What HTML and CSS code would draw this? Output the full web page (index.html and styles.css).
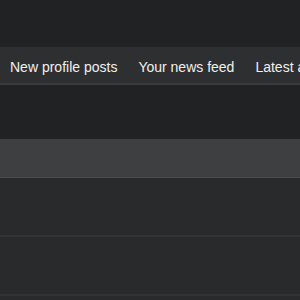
FILE: index.html
```html
<!DOCTYPE html>
<html>
<head>
<meta charset="utf-8">
<link rel="stylesheet" href="styles.css">
</head>
<body>
<div class="top"></div>
<nav class="tabs">
  <a class="tab">New profile posts</a>
  <a class="tab">Your news feed</a>
  <a class="tab">Latest activity</a>
</nav>
<div class="gap"></div>
<div class="head"></div>
<div class="row"></div>
<div class="row"></div>
</body>
</html>
```
FILE: styles.css
```css
html, body { margin: 0; padding: 0; }
body {
  width: 300px;
  height: 300px;
  overflow: hidden;
  background: #292a2c;
  font-family: "Liberation Sans", Arial, sans-serif;
}
.top { height: 47px; background: #212224; }
.tabs {
  height: 38px;
  box-sizing: border-box;
  padding-top: 3px;
  background: #2e2f31;
  border-bottom: 2px solid #3a3b3d;
  display: flex;
  align-items: center;
  white-space: nowrap;
  overflow: hidden;
}
.tab {
  color: #f0f0f0;
  font-size: 14px;
  padding: 0 11px 0 10px;
  flex-shrink: 0;
}
.gap { height: 54px; background: #212224; }
.head {
  height: 38px;
  background: #3e3f41;
  border-bottom: 1px solid #4a4b4d;
}
.row {
  height: 57px;
  background: #292a2c;
  border-bottom: 2px solid #323335;
}
```
